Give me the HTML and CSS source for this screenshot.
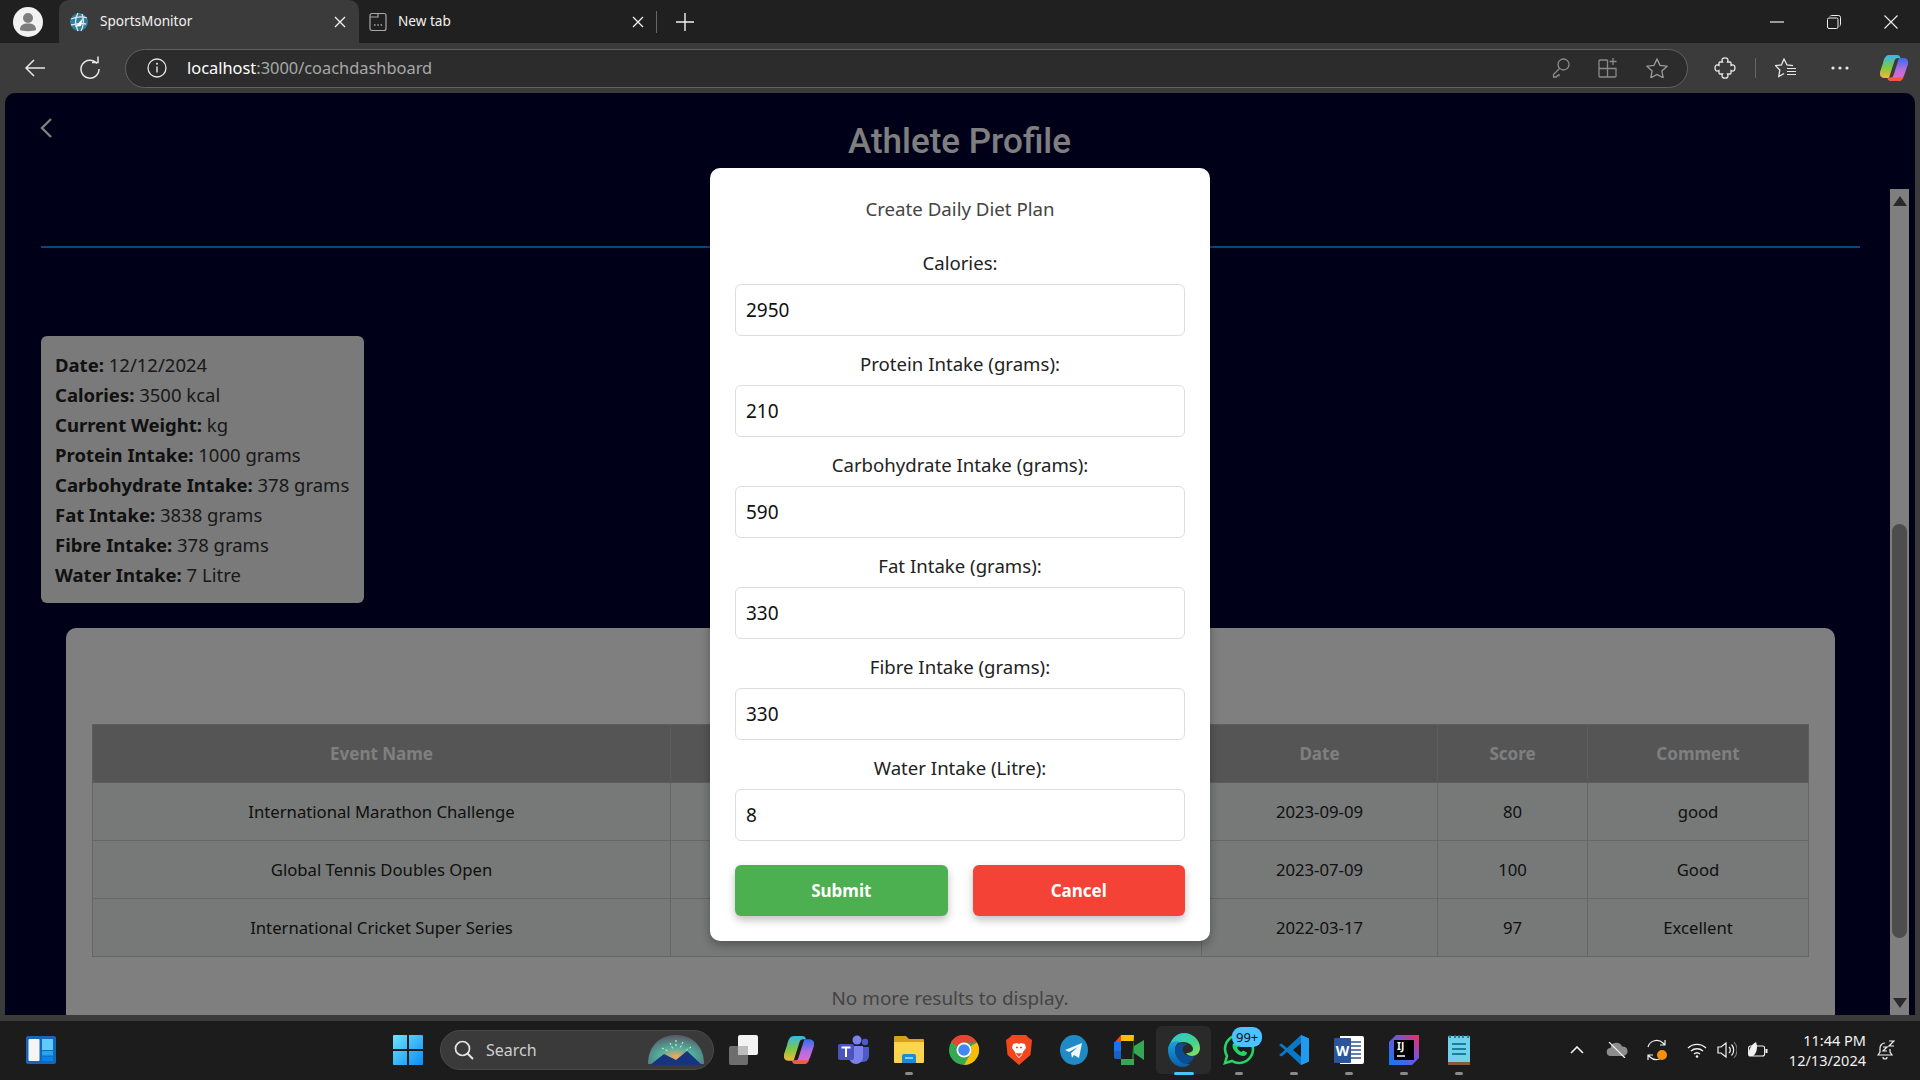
FILE: index.html
```html
<!DOCTYPE html>
<html lang="en">

<head>
    <meta charset="UTF-8">
    <meta name="viewport" content="width=device-width, initial-scale=1.0">
    <title>SportsMonitor</title>
    <link rel="stylesheet" href="styles.css">
</head>

<body>
    <!-- Barra de pestañas -->
    <div class="tabstrip">
        <div class="profile">
            <svg width="30" height="30" viewBox="0 0 30 30"><circle cx="15" cy="15" r="15" fill="#f2f2f2"/><circle cx="15" cy="11" r="5" fill="#7d7d7d"/><path d="M7 23c0-5 3-6.500 8-6.500s8 1.500 8 6.500c-2 1.500-14 1.500-16 0z" fill="#7d7d7d"/></svg>
        </div>
        <div class="tab tab-active">
            <svg class="favicon" width="20" height="20" viewBox="0 0 20 20"><circle cx="10" cy="10" r="9" fill="#2f7f9f"/><path d="M2 7c5-2 11-3 16-1M2 13c5-1 11-2 15-1M9 1c-3 5-3 12 0 18M13 2c2 5 2 11-1 17" stroke="#dbe9ee" stroke-width="1.300" fill="none"/><path d="M6 15l8-9-2 8z" fill="#fff"/></svg>
            <span class="tab-title">SportsMonitor</span>
            <svg class="tab-close" width="12" height="12" viewBox="0 0 12 12"><path d="M1 1l10 10M11 1L1 11" stroke="#f2f2f2" stroke-width="1.300"/></svg>
        </div>
        <div class="tab">
            <svg class="favicon" width="18" height="20" viewBox="0 0 18 20"><path d="M3 1.500h12a2 2 0 0 1 2 2v13a2 2 0 0 1-2 2H3a2 2 0 0 1-2-2v-13a2 2 0 0 1 2-2zM1 5h8V1.500" stroke="#a9a9a9" stroke-width="1.200" fill="none"/><path d="M5 13h1.500M8.300 13h1.500M11.600 13h1.500" stroke="#a9a9a9" stroke-width="1.500"/></svg>
            <span class="tab-title">New tab</span>
            <svg class="tab-close" width="12" height="12" viewBox="0 0 12 12"><path d="M1 1l10 10M11 1L1 11" stroke="#f2f2f2" stroke-width="1.300"/></svg>
        </div>
        <div class="tab-divider"></div>
        <svg class="new-tab" width="18" height="18" viewBox="0 0 18 18"><path d="M9 0v18M0 9h18" stroke="#f2f2f2" stroke-width="1.400"/></svg>
        <div class="win-controls">
            <svg width="14" height="14" viewBox="0 0 14 14"><path d="M0 7h14" stroke="#eee" stroke-width="1.200"/></svg>
            <svg width="14" height="14" viewBox="0 0 14 14"><path d="M3 1.500A1.500 1.500 0 0 1 4.500.5h7A2 2 0 0 1 13.500 2.500v7a1.500 1.500 0 0 1-1 1.500" stroke="#eee" fill="none"/><rect x=".5" y="3" width="10.500" height="10.500" rx="1.500" stroke="#eee" fill="none"/></svg>
            <svg width="14" height="14" viewBox="0 0 14 14"><path d="M.5.500l13 13M13.500.500l-13 13" stroke="#eee" stroke-width="1.100"/></svg>
        </div>
    </div>

    <!-- Barra de direcciones -->
    <div class="toolbar">
        <svg class="tool-back" width="22" height="20" viewBox="0 0 22 20"><path d="M21 10H2M10 2l-8 8 8 8" stroke="#e8e8e8" stroke-width="1.500" fill="none"/></svg>
        <svg class="tool-reload" width="22" height="24" viewBox="0 0 22 24"><path d="M18 7.500A9 9 0 1 0 20 13M13 6.500h6v-6" stroke="#e8e8e8" stroke-width="1.500" fill="none"/></svg>
        <div class="address">
            <svg class="info-icon" width="20" height="20" viewBox="0 0 20 20"><circle cx="10" cy="10" r="9" stroke="#e8e8e8" stroke-width="1.300" fill="none"/><path d="M10 8.500v6" stroke="#e8e8e8" stroke-width="1.400"/><circle cx="10" cy="5.800" r="1" fill="#e8e8e8"/></svg>
            <span class="url"><span class="url-host">localhost</span>:3000/coachdashboard</span>
            <svg class="addr-icon key" width="18" height="20" viewBox="0 0 18 20"><circle cx="11.500" cy="6.500" r="5.500" stroke="#8a8a8a" stroke-width="1.300" fill="none"/><path d="M7.500 10.500L1.500 16.500v2.500h3l1-1.500h1.500V16" stroke="#8a8a8a" stroke-width="1.300" fill="none"/></svg>
            <svg class="addr-icon apps-add" width="20" height="20" viewBox="0 0 20 20"><path d="M9.500 2H2a1 1 0 0 0-1 1v15a1 1 0 0 0 1 1h15a1 1 0 0 0 1-1v-7.500H1M9.500 2v17" stroke="#8a8a8a" stroke-width="1.300" fill="none"/><path d="M15 0v7M11.500 3.500h7" stroke="#8a8a8a" stroke-width="1.300"/></svg>
            <svg class="addr-icon star" width="22" height="20" viewBox="0 0 22 20"><path d="M11 1l3 6.300 7 .9-5.100 4.800 1.300 6.800L11 16.500l-6.200 3.300 1.300-6.800L1 8.200l7-.9z" stroke="#9c9c9c" stroke-width="1.300" fill="none"/></svg>
        </div>
        <svg class="tool-ext" width="22" height="22" viewBox="-1 0 22 22"><path d="M7.500 5c-1.500-3 .5-4.200 2.500-4.200s4 1.200 2.500 4.200H15a1 1 0 0 1 1 1v2.500c3-1.500 4 .5 4 2.500s-1 4-4 2.500V16a1 1 0 0 1-1 1h-2.500c1.500 3-.5 4.200-2.500 4.200s-4-1.200-2.500-4.200H5a1 1 0 0 1-1-1v-2.500c-3 1.500-4-.5-4-2.500s1-4 4-2.500V6a1 1 0 0 1 1-1z" stroke="#e8e8e8" stroke-width="1.300" fill="none"/></svg>
        <div class="tool-divider"></div>
        <svg class="tool-fav" width="22" height="20" viewBox="0 0 22 20"><path d="M18 7.600L12 7 9 1 6.400 6.900l-5.900.8L4.800 12l-1 6.500 5.200-3" stroke="#e8e8e8" stroke-width="1.300" fill="none"/><path d="M12 10.500h9M12 13.500h9M12 16.500h9" stroke="#e8e8e8" stroke-width="1.200"/></svg>
        <svg class="tool-more" width="18" height="4" viewBox="0 0 18 4"><circle cx="2" cy="2" r="1.600" fill="#e8e8e8"/><circle cx="9" cy="2" r="1.600" fill="#e8e8e8"/><circle cx="16" cy="2" r="1.600" fill="#e8e8e8"/></svg>
        <svg class="tool-copilot" width="28" height="28" viewBox="0 0 28 28">
            <defs>
                <linearGradient id="cpa" x1="0" y1="0" x2="0" y2="1"><stop offset="0" stop-color="#37b6f0"/><stop offset=".55" stop-color="#7fc93f"/><stop offset="1" stop-color="#f6b73c"/></linearGradient>
                <linearGradient id="cpb" x1="0" y1="0" x2="0" y2="1"><stop offset="0" stop-color="#2f6ff0"/><stop offset=".5" stop-color="#b56be0"/><stop offset="1" stop-color="#e86fc0"/></linearGradient>
                <symbol id="copilot-mark" viewBox="0 0 28 28">
                    <path d="M9 1h8c2 0 3 1 3.500 3H18c-2 0-3 1-3.600 3L9 24H4c-3 0-5-3-4-6l3-9C4 4 6 1 9 1z" fill="url(#cpa)"/>
                    <path d="M19 27h-8c-2 0-3-1-3.500-3H10c2 0 3-1 3.600-3L19 4h5c3 0 5 3 4 6l-3 9c-1 3-3 8-6 8z" fill="url(#cpb)"/>
                    <path d="M11 27h8c2 0 3.500-1.500 4.500-3.500H8c.5 2 1.500 3.500 3 3.500z" fill="#f2593f"/>
                </symbol>
            </defs>
            <use href="#copilot-mark"/>
        </svg>
    </div>

    <!-- Contenido de la pagina -->
    <div class="viewport">
        <div class="page">
            <div class="page-head">
                <svg class="back-link" width="12" height="20" viewBox="0 0 12 20"><path d="M11 1L2 10l9 9" stroke="#fff" stroke-width="2.400" fill="none"/></svg>
                <h1 class="page-title">Athlete Profile</h1>
            </div>

            <div class="diet-summary">
                <div><b>Date:</b> 12/12/2024</div>
                <div><b>Calories:</b> 3500 kcal</div>
                <div><b>Current Weight:</b> kg</div>
                <div><b>Protein Intake:</b> 1000 grams</div>
                <div><b>Carbohydrate Intake:</b> 378 grams</div>
                <div><b>Fat Intake:</b> 3838 grams</div>
                <div><b>Fibre Intake:</b> 378 grams</div>
                <div><b>Water Intake:</b> 7 Litre</div>
            </div>

            <div class="events-card">
                <table class="events">
                    <colgroup>
                        <col class="col-name">
                        <col class="col-hidden">
                        <col class="col-date">
                        <col class="col-score">
                        <col class="col-comment">
                    </colgroup>
                    <thead>
                        <tr>
                            <th>Event Name</th>
                            <th></th>
                            <th>Date</th>
                            <th>Score</th>
                            <th>Comment</th>
                        </tr>
                    </thead>
                    <tbody>
                        <tr>
                            <td>International Marathon Challenge</td>
                            <td></td>
                            <td>2023-09-09</td>
                            <td>80</td>
                            <td>good</td>
                        </tr>
                        <tr>
                            <td>Global Tennis Doubles Open</td>
                            <td></td>
                            <td>2023-07-09</td>
                            <td>100</td>
                            <td>Good</td>
                        </tr>
                        <tr>
                            <td>International Cricket Super Series</td>
                            <td></td>
                            <td>2022-03-17</td>
                            <td>97</td>
                            <td>Excellent</td>
                        </tr>
                    </tbody>
                </table>
                <p class="no-more">No more results to display.</p>
            </div>
        </div>

        <div class="scrollbar">
            <div class="scroll-arrow"><svg width="14" height="10" viewBox="0 0 14 10"><path d="M7 0l7 10H0z" fill="#555"/></svg></div>
            <div class="scroll-thumb"></div>
            <div class="scroll-arrow scroll-arrow-down"><svg width="14" height="10" viewBox="0 0 14 10"><path d="M7 10L14 0H0z" fill="#555"/></svg></div>
        </div>

        <!-- Modal sobre la pagina -->
        <div class="overlay">
            <form class="modal">
                <h2 class="modal-title">Create Daily Diet Plan</h2>
                <label for="calories">Calories:</label>
                <input type="text" id="calories" value="2950">
                <label for="protein">Protein Intake (grams):</label>
                <input type="text" id="protein" value="210">
                <label for="carbs">Carbohydrate Intake (grams):</label>
                <input type="text" id="carbs" value="590">
                <label for="fat">Fat Intake (grams):</label>
                <input type="text" id="fat" value="330">
                <label for="fibre">Fibre Intake (grams):</label>
                <input type="text" id="fibre" value="330">
                <label for="water">Water Intake (Litre):</label>
                <input type="text" id="water" value="8">
                <div class="modal-buttons">
                    <button type="button" class="btn-submit">Submit</button>
                    <button type="button" class="btn-cancel">Cancel</button>
                </div>
            </form>
        </div>
    </div>

    <!-- Barra de tareas -->
    <div class="taskbar">
        <svg class="widgets" width="30" height="28" viewBox="0 0 30 28"><rect width="30" height="28" rx="2" fill="#1565b8"/><rect x="2.500" y="3" width="11" height="22" rx="1" fill="#f4f4f4"/><rect x="16" y="3" width="11" height="11" fill="#5ecbfa"/><rect x="16" y="15" width="11" height="4.500" fill="#2aa3ee"/><rect x="16" y="20.500" width="11" height="4.500" fill="#0a84e0"/></svg>
        <svg class="start" width="30" height="30" viewBox="0 0 30 30">
            <defs><linearGradient id="win" x1="0" y1="0" x2="1" y2="1"><stop offset="0" stop-color="#6fe3fb"/><stop offset="1" stop-color="#0a8cf5"/></linearGradient></defs>
            <path d="M1 0h13v14H0V1a1 1 0 0 1 1-1zM16 0h13a1 1 0 0 1 1 1v13H16zM0 16h14v14H1a1 1 0 0 1-1-1zM16 16h14v13a1 1 0 0 1-1 1H16z" fill="url(#win)"/>
        </svg>
        <div class="search">
            <svg width="20" height="20" viewBox="0 0 20 20"><circle cx="8.500" cy="8.500" r="7" stroke="#e6e6e6" stroke-width="1.700" fill="none"/><path d="M13.500 13.500L19 19" stroke="#e6e6e6" stroke-width="1.900"/></svg>
            <span class="search-text">Search</span>
            <svg class="search-art" width="56" height="32" viewBox="0 0 56 32">
                <defs><radialGradient id="spark" cx=".5" cy=".75" r=".7"><stop offset="0" stop-color="#f0a860"/><stop offset=".45" stop-color="#4fae9c"/><stop offset="1" stop-color="#5a5f6a"/></radialGradient></defs>
                <path d="M0 30C0 12 12 1 28 1s28 11 28 29z" fill="url(#spark)"/>
                <path d="M2 31l14-11 12 6 11-9 15 14z" fill="#17357f"/>
                <path d="M28 6v8M22 9l3 6M35 8l-3 6M14 14l6 3M43 13l-6 4" stroke="#f6f0dc" stroke-width="1" stroke-dasharray="2 2"/>
            </svg>
        </div>
        <div class="apps">
            <div class="app">
                <svg width="30" height="30" viewBox="0 0 30 30"><rect x="0" y="11" width="19" height="19" rx="2" fill="#8a8a8a" opacity=".75"/><rect x="9" y="0" width="20" height="20" rx="2" fill="#f3f3f3"/><rect x="9" y="11" width="10" height="9" fill="#bdbdbd"/></svg>
            </div>
            <div class="app">
                <svg width="30" height="30" viewBox="0 0 28 28"><use href="#copilot-mark"/></svg>
            </div>
            <div class="app">
                <svg width="32" height="30" viewBox="0 0 32 30"><circle cx="19" cy="5" r="4.500" fill="#7b83eb"/><circle cx="27" cy="7" r="3.200" fill="#5059c9"/><path d="M21 12h10v9a6 6 0 0 1-6 6h-4z" fill="#5059c9"/><path d="M11 11h14v11a7 7 0 0 1-14 0z" fill="#7b83eb"/><rect x="0" y="9" width="16" height="16" rx="2" fill="#4b53bc"/><path d="M3.500 12.500h9M8 12.500v9.500" stroke="#fff" stroke-width="2"/></svg>
            </div>
            <div class="app app-running">
                <svg width="30" height="28" viewBox="0 0 30 28"><path d="M1 0h11l3 3h14a1 1 0 0 1 1 1v4H0V1a1 1 0 0 1 1-1z" fill="#d89e1e"/><path d="M0 6h30v20a1 1 0 0 1-1 1H1a1 1 0 0 1-1-1z" fill="#fdd44e"/><path d="M8 20a2 2 0 0 1 2-2h10a2 2 0 0 1 2 2v7H8z" fill="#1a8bd8"/><rect x="11" y="21" width="8" height="2" fill="#7fd0f5"/></svg>
            </div>
            <div class="app">
                <svg width="30" height="30" viewBox="0 0 30 30"><circle cx="15" cy="15" r="15" fill="#34a853"/><path d="M15 0a15 15 0 0 1 13 7.500H15a7.500 7.500 0 0 0-6.500 3.750L2 7A15 15 0 0 1 15 0z" fill="#ea4335"/><path d="M28 7.500A15 15 0 0 1 15 30l6.500-11.250A7.500 7.500 0 0 0 21.500 11.300z" fill="#fbbc05"/><circle cx="15" cy="15" r="7.500" fill="#fff"/><circle cx="15" cy="15" r="5.800" fill="#4285f4"/></svg>
            </div>
            <div class="app">
                <svg width="26" height="30" viewBox="0 0 26 30"><path d="M6 0h14l3 3 3 2-1.500 15L13 30 1.500 20 0 5l3-2z" fill="#f1471d"/><path d="M7 9l4-1 2 1 2-1 4 1 1 4-3 4-1 3-3 3-3-3-1-3-3-4z" fill="#fff"/><path d="M10 12.500h2M14 12.500h2M11 19h4l-2 2z" stroke="#f1471d" stroke-width="1.400" fill="#f1471d"/></svg>
            </div>
            <div class="app">
                <svg width="28" height="30" viewBox="0 0 28 30"><ellipse cx="14" cy="15" rx="14" ry="15" fill="#1f8ac5"/><path d="M5 15l17-7-3 15-5-3-2 3-1-5 7-6-9 5z" fill="#f1f7fb"/></svg>
            </div>
            <div class="app">
                <svg width="30" height="30" viewBox="0 0 30 30"><path d="M7 0h13v6H7z" fill="#fbbc04"/><path d="M1 7l6-7v7z" fill="#ea4335"/><path d="M0 7h7v9H0z" fill="#1a73e8"/><path d="M0 16h7v8H2a2 2 0 0 1-2-2z" fill="#1a5fc8"/><path d="M7 24h13v6H7z" fill="#34a853"/><path d="M20 0v10l0 14h-2a2 2 0 0 0 0 0z" fill="#188038"/><path d="M20 11l10-6v20l-10-7z" fill="#34a853"/><path d="M7 6h13v2H7zM7 22h13v2H7z" fill="#1f1f1f" opacity=".2"/></svg>
            </div>
            <div class="app app-active">
                <svg width="32" height="34" viewBox="0 0 32 34">
                    <defs>
                        <linearGradient id="edgea" x1="0" y1="0" x2="1" y2="1"><stop offset="0" stop-color="#2fc4e8"/><stop offset=".6" stop-color="#42d28a"/><stop offset="1" stop-color="#8fe35a"/></linearGradient>
                        <linearGradient id="edgeb" x1="0" y1="0" x2="0" y2="1"><stop offset="0" stop-color="#1aa0dd"/><stop offset="1" stop-color="#0a5fa8"/></linearGradient>
                    </defs>
                    <path d="M16 0c9 0 16 7 16 15 0 5-4 8-8 8-3 0-5-1-6-3 5 0 7-2 7-4 0-4-5-7-10-7-6 0-12 3-15 8C2 7 8 0 16 0z" fill="url(#edgea)"/>
                    <path d="M0 17C0 9 7 7 12 9c-3 1-5 4-5 8 0 7 7 14 15 14-2 2-5 3-7 3C6 34 0 26 0 17z" fill="url(#edgeb)"/>
                    <path d="M7 17c0-4 3-7 7-7 3 0 5 1 5 2-5 0-5 5-3 8s6 4 10 3c-1 5-4 7-8 8C12 30 7 24 7 17z" fill="#0c4d8f"/>
                </svg>
            </div>
            <div class="app app-running">
                <svg width="32" height="34" viewBox="0 0 32 34"><path d="M16 2a14 14 0 0 1 0 28c-3 0-5-.7-7-2l-7 2 2-7c-1.300-2-2-4-2-7A14 14 0 0 1 16 2z" stroke="#25d366" stroke-width="2.600" fill="none"/><path d="M11 10c-2 1-2 4 0 7s6 6 9 6c3 0 4-2 4-3.500l-4-2-1.500 1.500c-2-.5-4-3-4.500-4.500l1.500-1.500-1.500-3.500z" fill="#25d366"/></svg>
                <span class="badge">99+</span>
            </div>
            <div class="app app-running">
                <svg width="30" height="30" viewBox="0 0 30 30"><path d="M22 0l8 3.500v23L22 30 8 17l-5.500 4.500L0 20l6-5-6-5 2.500-1.500L8 13z" fill="#0a78c9"/><path d="M22 0l8 3.500v23L22 30z" fill="#1f9cf0"/><path d="M22 8l-8 7 8 7z" fill="#1c1c1c"/></svg>
            </div>
            <div class="app app-running">
                <svg width="30" height="30" viewBox="0 0 30 30"><path d="M6 1h22a2 2 0 0 1 2 2v24a2 2 0 0 1-2 2H6z" fill="#fff"/><path d="M17 7h10M17 11h10M17 15h10M17 19h10M17 23h10" stroke="#2b579a" stroke-width="1.500"/><rect x="0" y="3" width="17" height="25" rx="1" fill="#2b579a"/><text class="word-w" x="8.500" y="21">W</text></svg>
            </div>
            <div class="app app-running">
                <svg width="30" height="30" viewBox="0 0 30 30">
                    <defs><linearGradient id="ij" x1="0" y1="1" x2="1" y2="0"><stop offset="0" stop-color="#0a7bf5"/><stop offset=".6" stop-color="#7c52d8"/><stop offset="1" stop-color="#fe2857"/></linearGradient></defs>
                    <path d="M7 0h23v23l-7 7H0V7z" fill="url(#ij)"/>
                    <rect x="5" y="5" width="20" height="20" fill="#000"/>
                    <text class="ij-text" x="8" y="15">IJ</text>
                    <path d="M8 21h8" stroke="#fff" stroke-width="1.500"/>
                </svg>
            </div>
            <div class="app app-running">
                <svg width="22" height="32" viewBox="0 0 22 32"><rect x="0" y="2" width="22" height="27" rx="1" fill="#6fd2e8"/><rect x="0" y="28" width="22" height="3" fill="#8a5a34"/><path d="M2 1v3M7 1v3M11 1v3M15 1v3M20 1v3" stroke="#0f6f8a" stroke-width="1.600"/><path d="M4 10h14M4 15h14M4 20h14" stroke="#1780a0" stroke-width="2"/></svg>
            </div>
        </div>
        <div class="tray">
            <svg class="tray-chevron" width="14" height="8" viewBox="0 0 14 8"><path d="M1 7l6-6 6 6" stroke="#f2f2f2" stroke-width="1.600" fill="none"/></svg>
            <svg class="tray-cloud" width="22" height="16" viewBox="0 0 22 16"><path d="M5 14a4 4 0 0 1-.5-8A6 6 0 0 1 16 4.500a4.500 4.500 0 0 1 1.500 9.500z" fill="#8c8c8c"/><path d="M3 0l16 16" stroke="#f2f2f2" stroke-width="1.200"/></svg>
            <svg class="tray-sync" width="22" height="22" viewBox="0 0 22 22"><path d="M2 8a9 9 0 0 1 15-4l2 2M19 1v5h-5M19 14a9 9 0 0 1-15 4l-2-2M2 21v-5h5" stroke="#f2f2f2" stroke-width="1.200" fill="none"/><circle cx="16" cy="16" r="5" fill="#f7910b"/></svg>
            <svg class="tray-wifi" width="20" height="16" viewBox="0 0 20 16"><path d="M1 6a13 13 0 0 1 18 0M4 9a9 9 0 0 1 12 0M7 12a4.500 4.500 0 0 1 6 0" stroke="#f2f2f2" stroke-width="1.400" fill="none"/><circle cx="10" cy="14.500" r="1.300" fill="#f2f2f2"/></svg>
            <svg class="tray-volume" width="20" height="18" viewBox="0 0 20 18"><path d="M1 6h3l5-4v14l-5-4H1z" stroke="#f2f2f2" stroke-width="1.200" fill="none"/><path d="M12 6a4 4 0 0 1 0 6M14.500 3.500a8 8 0 0 1 0 11" stroke="#f2f2f2" stroke-width="1.200" fill="none"/><path d="M17 1a12 12 0 0 1 0 16" stroke="#777" stroke-width="1.100" fill="none"/></svg>
            <svg class="tray-battery" width="20" height="16" viewBox="0 0 20 16"><rect x=".6" y="4" width="16" height="10" rx="2" stroke="#f2f2f2" stroke-width="1.100" fill="none"/><rect x="17.500" y="7" width="2" height="4" fill="#f2f2f2"/><path d="M1 14C0 8 3 3 8 0c2 5 1 11-3 14z" fill="#f2f2f2"/></svg>
            <div class="clock">
                <div>11:44 PM</div>
                <div>12/13/2024</div>
            </div>
            <svg class="tray-bell" width="18" height="20" viewBox="0 0 18 20"><path d="M8 3a5 5 0 0 0-5 5v4l-2 3h14l-2-3V9M6 17a2 2 0 0 0 4 0" stroke="#f2f2f2" stroke-width="1.200" fill="none"/><path d="M6 7h4l-4 4h4M12 1h5l-5 5h5" stroke="#f2f2f2" stroke-width="1.200" fill="none"/></svg>
        </div>
    </div>
</body>

</html>
```

FILE: styles.css
```css
/* Ventana del navegador */
body {
    font-family: "Noto Sans", sans-serif;
    margin: 0;
    height: 1080px;
    overflow: hidden;
    display: flex;
    flex-direction: column;
    background-color: #3b3b3b;
}

.tabstrip {
    height: 43px;
    display: flex;
    align-items: center;
    background-color: #202020;
    color: #f2f2f2;
    font-size: 13.6px;
    flex-shrink: 0;
}

.profile {
    width: 30px;
    height: 30px;
    margin: 0 16px 0 13px;
}

.tab {
    width: 297px;
    height: 43px;
    display: flex;
    align-items: center;
    padding: 0 12px 0 10px;
    box-sizing: border-box;
}

.tab-active {
    width: 300px;
    padding: 0 13px 0 10px;
    background-color: #3b3b3b;
    border-radius: 10px 10px 0 0;
}

.favicon {
    margin-right: 11px;
    flex-shrink: 0;
}

.tab-title {
    flex: 1;
    margin-bottom: 2px;
}

.tab-divider {
    width: 1px;
    height: 22px;
    background-color: #666;
}

.new-tab {
    margin-left: 19px;
}

.win-controls {
    margin-left: auto;
    display: flex;
    gap: 43px;
    padding-right: 22px;
}

.toolbar {
    height: 50px;
    display: flex;
    align-items: center;
    background-color: #3b3b3b;
    flex-shrink: 0;
}

.tool-back {
    margin-left: 24px;
}

.tool-reload {
    margin-left: 33px;
}

.address {
    width: 1563px;
    height: 39px;
    margin-left: 24px;
    display: flex;
    align-items: center;
    background-color: #2c2c2c;
    border: 1.5px solid #626262;
    border-radius: 20px;
    box-sizing: border-box;
    font-size: 16.4px;
    color: #a8a8a8;
}

.info-icon {
    margin-left: 21px;
    margin-right: 20px;
}

.url {
    flex: 1;
    margin-bottom: 2px;
}

.url-host {
    color: #fff;
}

.addr-icon {
    margin-right: 28px;
}

.addr-icon.star {
    margin-right: 19px;
}

.tool-ext {
    margin-left: 26px;
}

.tool-divider {
    width: 1px;
    height: 20px;
    margin-left: 19px;
    background-color: #666;
}

.tool-fav {
    margin-left: 19px;
}

.tool-more {
    margin-left: 34px;
}

.tool-copilot {
    margin-left: 31px;
}

/* Area de la pagina */
.viewport {
    position: relative;
    height: 922px;
    margin: 0 5px;
    display: flex;
    overflow: hidden;
    background-color: #000033;
    border-radius: 10px 10px 0 0;
    flex-shrink: 0;
}

.page {
    width: 1885px;
    padding: 0 30px 0 36px;
    box-sizing: border-box;
    flex-shrink: 0;
}

.page-head {
    height: 153px;
    display: flex;
    align-items: flex-start;
    border-bottom: 2px solid #0094ff;
}

.back-link {
    margin-top: 25px;
    margin-left: -1px;
    margin-right: 7px;
    flex-shrink: 0;
}

.page-title {
    flex: 1;
    margin: 23px 0 0;
    font-family: Roboto, sans-serif;
    font-size: 35px;
    font-weight: 500;
    line-height: 52px;
    text-align: center;
    color: #fff;
}

.diet-summary {
    width: 323px;
    height: 267px;
    margin-top: 88px;
    padding: 14px 14px 8px;
    box-sizing: border-box;
    background-color: #f4f4f4;
    border-radius: 6px;
    font-size: 18.5px;
    line-height: 30px;
    color: #333;
}

.diet-summary b {
    color: #222;
}

.events-card {
    margin: 25px 25px 0;
    padding: 96px 27px 60px 26px;
    background-color: #fff;
    border-radius: 10px;
}

.events {
    width: 1716px;
    border-collapse: collapse;
    table-layout: fixed;
    font-size: 16.7px;
    text-align: center;
    color: #222;
}

.col-name {
    width: 578px;
}

.col-hidden {
    width: 531px;
}

.col-date {
    width: 236px;
}

.col-score {
    width: 150px;
}

.col-comment {
    width: 221px;
}

.events th {
    height: 57px;
    padding: 0;
    background-color: #aaaaaa;
    border: 1px solid #bbb;
    color: #fff;
    font-size: 17px;
    font-weight: 700;
}

.events td {
    height: 57px;
    padding: 0;
    background-color: #eef2f0;
    border: 1px solid #ccc;
}

.no-more {
    margin: 27px 0 0;
    font-size: 18.9px;
    line-height: 28px;
    text-align: center;
    color: #888;
}

.scrollbar {
    width: 19px;
    height: 826px;
    margin-top: 96px;
    display: flex;
    flex-direction: column;
    align-items: center;
    background-color: #fff;
    flex-shrink: 0;
}

.scroll-arrow {
    height: 24px;
    display: flex;
    align-items: center;
    justify-content: center;
    flex-shrink: 0;
}

.scroll-thumb {
    width: 15px;
    height: 414px;
    margin-top: 311px;
    background-color: #9a9a9a;
    border-radius: 8px;
}

.scroll-arrow-down {
    margin-top: auto;
}

/* Modal */
.overlay {
    position: absolute;
    inset: 0;
    display: flex;
    align-items: center;
    justify-content: center;
    background-color: rgba(0, 0, 0, 0.5);
}

.modal {
    width: 500px;
    padding: 25px;
    box-sizing: border-box;
    background-color: #fff;
    border-radius: 10px;
    box-shadow: 0 4px 10px rgba(0, 0, 0, 0.3);
    text-align: center;
}

.modal-title {
    margin: 0 0 24px;
    font-size: 18.7px;
    font-weight: 400;
    line-height: 32px;
    color: #444;
}

.modal label {
    display: block;
    margin-bottom: 7px;
    font-size: 18.6px;
    line-height: 28px;
    color: #222;
}

.modal input {
    display: block;
    width: 100%;
    height: 52px;
    margin-bottom: 14px;
    padding: 1px 10px 0;
    border: 1px solid #ddd;
    border-radius: 6px;
    box-sizing: border-box;
    font-family: "Noto Sans", sans-serif;
    font-size: 19px;
    color: #111;
}

.modal-buttons {
    display: flex;
    gap: 25px;
    margin-top: 24px;
}

.modal-buttons button {
    flex: 1;
    height: 51px;
    border: none;
    border-radius: 6px;
    box-shadow: 0 4px 8px rgba(0, 0, 0, 0.25);
    color: #fff;
    font-family: "Noto Sans", sans-serif;
    font-size: 17px;
    font-weight: 700;
}

.btn-submit {
    background-color: #4caf50;
}

.btn-cancel {
    background-color: #f44336;
}

/* Barra de tareas */
.taskbar {
    height: 57px;
    margin-top: 6px;
    padding-bottom: 2px;
    display: flex;
    align-items: center;
    background-color: #1c1c1c;
    color: #f2f2f2;
    flex-shrink: 0;
}

.widgets {
    margin-left: 26px;
}

.start {
    margin-left: 337px;
}

.search {
    width: 274px;
    height: 40px;
    margin-left: 17px;
    display: flex;
    align-items: center;
    padding: 0 9px 0 13px;
    box-sizing: border-box;
    background-color: #3a3a3a;
    border: 1px solid #4a4a4a;
    border-radius: 20px;
    font-size: 16px;
    color: #cfcfcf;
}

.search-text {
    flex: 1;
    margin-left: 12px;
}

.apps {
    display: flex;
    margin-left: 2px;
}

.app {
    position: relative;
    width: 55px;
    height: 48px;
    display: flex;
    align-items: center;
    justify-content: center;
}

.app-running::after,
.app-active::after {
    content: "";
    position: absolute;
    bottom: -1px;
    left: 24px;
    width: 8px;
    height: 3px;
    border-radius: 2px;
    background-color: #8a8a8a;
}

.app-active {
    background-color: #2a2a2a;
    border-radius: 6px;
}

.app-active::after {
    left: 18px;
    width: 20px;
    background-color: #4cc2ff;
}

.badge {
    position: absolute;
    top: 1px;
    left: 21px;
    padding: 0 4px;
    border-radius: 9px;
    background-color: #4cc2ff;
    color: #111;
    font-size: 13px;
    line-height: 20px;
}

.word-w {
    font-family: "Noto Sans", sans-serif;
    font-size: 14px;
    font-weight: 700;
    fill: #fff;
    text-anchor: middle;
}

.ij-text {
    font-family: "Noto Sans", sans-serif;
    font-size: 10px;
    font-weight: 700;
    fill: #fff;
}

.tray {
    margin-left: auto;
    display: flex;
    align-items: center;
}

.tray-cloud {
    margin-left: 22px;
}

.tray-sync {
    margin-left: 18px;
}

.tray-wifi {
    margin-left: 19px;
}

.tray-volume {
    margin-left: 10px;
}

.tray-battery {
    margin-left: 11px;
}

.clock {
    margin-left: 21px;
    font-size: 14.5px;
    line-height: 20px;
    text-align: right;
}

.tray-bell {
    margin: 0 25px 0 11px;
}
```
